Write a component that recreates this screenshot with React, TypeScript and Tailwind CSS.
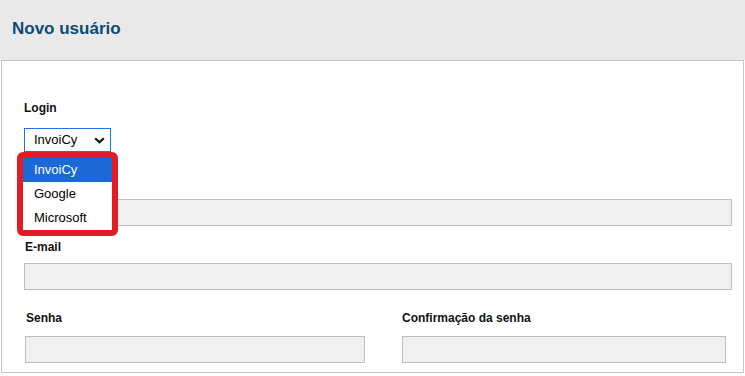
import React from "react";

const font = { fontFamily: '"Liberation Sans", Arial, sans-serif' };

function Label({ children, className = "" }: { children: React.ReactNode; className?: string }) {
  return (
    <div className={`text-[12px] leading-[14px] font-bold text-[#111] ${className}`}>{children}</div>
  );
}

function Input({ className = "" }: { className?: string }) {
  return <div className={`h-[27px] bg-[#f0f0f0] border border-[#bfbfbf] ${className}`} />;
}

export default function App() {
  return (
    <div className="w-[745px] h-[376px] bg-white overflow-hidden" style={font}>
      <div className="h-[60px] bg-[#e9e9e9] flex items-start pl-[12px] pt-[19px]">
        <h1 className="text-[17px] leading-[20px] font-bold text-[#0d4a7a]">Novo usuário</h1>
      </div>
      <div className="ml-[1px] w-[743px] h-[313px] border border-[#c6c6c6] pl-[22px] pr-[11px] pt-[40px]">
        <Label>Login</Label>
        <div className="relative mt-[13px] w-[87px] h-[24px] border border-[#1a73e8] bg-white flex items-center pl-[9px] pr-[4px] justify-between">
          <span className="text-[13px] text-black">InvoiCy</span>
          <svg width="11" height="7" viewBox="0 0 11 7" className="mr-[1px]">
            <path d="M1.2 1.2 L5.5 5.3 L9.8 1.2" fill="none" stroke="#111" strokeWidth="2.2" />
          </svg>
          <div className="absolute left-[-8px] top-[23px] w-[101px] h-[84px] border-[6px] border-[#e31b23] rounded-[6px] z-10 bg-white overflow-hidden">
            <div className="h-[24px] bg-[#1a69d4] text-white text-[13px] leading-[24px] pl-[11px]">InvoiCy</div>
            <div className="h-[24px] text-black text-[13px] leading-[24px] pl-[11px]">Google</div>
            <div className="h-[24px] text-black text-[13px] leading-[24px] pl-[11px]">Microsoft</div>
          </div>
        </div>
        <div className="mt-[24px] h-[14px]" />
        <Input className="mt-[9px]" />
        <Label className="mt-[14px] ml-[1px]">E-mail</Label>
        <Input className="mt-[9px]" />
        <div className="flex mt-[21px]">
          <div className="w-[340px] ml-[1px]">
            <Label className="ml-[1px]">Senha</Label>
            <Input className="mt-[11px]" />
          </div>
          <div className="w-[324px] ml-[37px]">
            <Label>Confirmação da senha</Label>
            <Input className="mt-[11px]" />
          </div>
        </div>
      </div>
    </div>
  );
}
